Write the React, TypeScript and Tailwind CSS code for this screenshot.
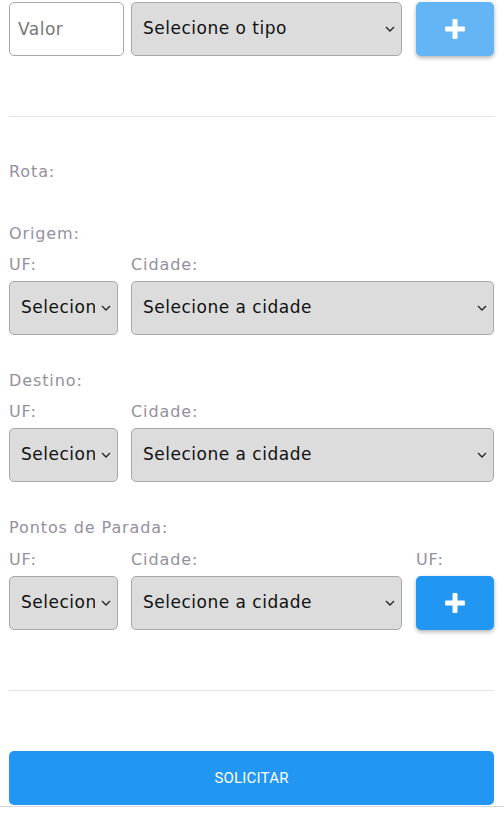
import React from 'react';

const FONT = { fontFamily: '"DejaVu Sans", "Open Sans", sans-serif' };

function Chevron() {
  return (
    <svg width="10" height="6" viewBox="0 0 10 6" className="pointer-events-none absolute top-1/2 -translate-y-1/2 right-[7px]">
      <path d="M1 1l4 4 4-4" fill="none" stroke="#222" strokeWidth="1.3" />
    </svg>
  );
}

function Select({ text, className }: { text: string; className: string }) {
  return (
    <div className={`relative h-[54px] ${className}`}>
      <select
        style={FONT}
        className="appearance-none w-full h-full bg-[#dcdcdc] border border-[#a8a8a8] rounded-[5px] pl-[11px] pr-[22px] text-[17px] tracking-[0.5px] text-[#111] overflow-hidden"
        defaultValue=""
      >
        <option value="">{text}</option>
      </select>
      <Chevron />
    </div>
  );
}

function PlusButton({ light }: { light?: boolean }) {
  return (
    <button
      className={`w-[78px] h-[54px] rounded-[5px] flex items-center justify-center shadow-[0_2px_4px_rgba(0,0,0,0.3)] ${light ? 'bg-[#64b5f6]' : 'bg-[#2196f3]'}`}
    >
      <svg width="22" height="22" viewBox="0 0 22 22">
        <rect x="8.5" y="1" width="5" height="20" rx="1" fill="#fff" />
        <rect x="1" y="8.5" width="20" height="5" rx="1" fill="#fff" />
      </svg>
    </button>
  );
}

function Label({ children, className = '' }: { children: React.ReactNode; className?: string }) {
  return <div style={FONT} className={`text-[16px] tracking-[0.9px] leading-6 text-[#958fa0] ${className}`}>{children}</div>;
}

function LocationBlock({ title, top }: { title: string; top: string }) {
  return (
    <div className={top}>
      <Label>{title}</Label>
      <div className="flex mt-[7px]">
        <Label className="w-[122px]">UF:</Label>
        <Label>Cidade:</Label>
      </div>
      <div className="flex gap-[13px] mt-[4px]">
        <Select text="Selecione" className="w-[109px]" />
        <Select text="Selecione a cidade" className="flex-1" />
      </div>
    </div>
  );
}

export default function App() {
  return (
    <div className="w-[504px] h-[813px] bg-white relative overflow-hidden" style={FONT}>
      <div className="px-[9px] pt-[2px] pr-[10px]">
        <div className="flex items-center">
          <input
            placeholder="Valor"
            style={FONT}
            className="w-[115px] h-[54px] border border-[#a8a8a8] rounded-[5px] px-[8px] text-[17px] tracking-[0.5px] placeholder:text-[#777] outline-none"
          />
          <Select text="Selecione o tipo" className="w-[271px] ml-[7px]" />
          <div className="ml-[14px]"><PlusButton light /></div>
        </div>

        <div className="mt-[60px] h-px bg-[#e3e3e3]" />

        <Label className="mt-[43px] text-[#8a8496]">Rota:</Label>

        <LocationBlock title="Origem:" top="mt-[38px]" />
        <LocationBlock title="Destino:" top="mt-[34px]" />

        <div className="mt-[34px]">
          <Label>Pontos de Parada:</Label>
          <div className="flex mt-[8px]">
            <Label className="w-[122px]">UF:</Label>
            <Label className="w-[285px]">Cidade:</Label>
            <Label>UF:</Label>
          </div>
          <div className="flex gap-[13px] mt-[4px] items-center">
            <Select text="Selecione" className="w-[109px]" />
            <Select text="Selecione a cidade" className="w-[271px]" />
            <div className="ml-[1px]"><PlusButton /></div>
          </div>
        </div>

        <div className="mt-[60px] h-px bg-[#e3e3e3]" />

        <button
          style={{ fontFamily: 'Roboto, "Noto Sans", sans-serif' }}
          className="mt-[60px] w-full h-[54px] bg-[#2196f3] text-white text-[15px] rounded-[5px] uppercase tracking-[0.2px]"
        >
          Solicitar
        </button>
      </div>
      <div className="absolute left-0 right-0 top-[806px] h-px bg-[#d8d8dc]" />
    </div>
  );
}
